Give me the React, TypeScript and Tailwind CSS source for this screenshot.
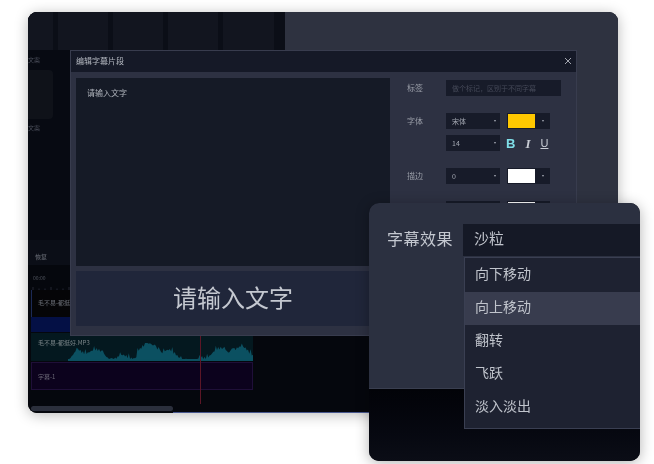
const font = { fontFamily: '"Noto Sans CJK SC", "Noto Sans", sans-serif' };

function wave() {
  const n = 150;
  const w = 185 / (n - 1);
  const pts: string[] = [];
  for (let i = 0; i < n; i++) {
    const env = 4 + 4 * Math.sin(i / 9) + 3 * Math.sin(i / 3.1) + (i > 55 && i < 75 ? 5 : 0) + (i > 130 ? 4 : 0);
    const jag = Math.abs(Math.sin(i * 1.7) * 3) + (i % 7 === 0 ? 3 : 0);
    const fade = i < 8 ? i / 8 : i > 96 && i < 106 ? 0.2 : 1;
    const h = Math.max(1, (env + jag) * fade);
    pts.push(`${(i * w).toFixed(1)},${(18 - Math.min(h, 17)).toFixed(1)}`);
  }
  return `0,18 ${pts.join(" ")} 185,18`;
}

function Select({ label, w = "w-[54px]" }: { label: string; w?: string }) {
  return (
    <div className={`${w} h-4 bg-[#171b29] flex items-center justify-between pl-1.5 pr-[11px] text-[7px] text-[#a4a8b2]`}>
      <span>{label}</span>
      <span className="w-0 h-0 -mr-[7px] border-x-[1.5px] border-x-transparent border-t-[2.5px] border-t-[#a8acb6]" />
    </div>
  );
}

function Swatch({ color }: { color: string }) {
  return (
    <div className="w-[43px] h-4 bg-[#171b29] flex items-center justify-between pl-px pr-[6px]">
      <div className={`w-[27px] h-[14px] ${color}`} />
      <span className="w-0 h-0 border-x-[1.5px] border-x-transparent border-t-[2.5px] border-t-[#a8acb6]" />
    </div>
  );
}

function Tile({ w }: { w: string }) {
  return <div className={`${w} h-full bg-[#12151f]`} />;
}

export default function App() {
  return (
    <div className="relative w-[654px] h-[464px] bg-white overflow-hidden blur-[0.5px]" style={font}>
      {/* Main window */}
      <div className="absolute left-[28px] top-[12px] w-[590px] h-[401px] rounded-[9px] overflow-hidden flex flex-col bg-[#05070d] shadow-[0_2px_14px_rgba(0,0,0,0.28)]">
        <div className="h-[228px] flex shrink-0">
          <div className="w-[257px] bg-[#070a12] flex flex-col">
            <div className="h-[38px] flex gap-[5px] bg-[#0b0e17] shrink-0">
              <Tile w="w-[25px]" />
              <Tile w="w-[50px]" />
              <Tile w="w-[50px]" />
              <Tile w="w-[50px]" />
              <Tile w="w-[51px]" />
            </div>
            <div className="text-[6px] leading-[8px] text-[#4c505c] mt-[6px]">文案</div>
            <div className="w-[25px] h-[49px] bg-[#0f1219] rounded-r-sm mt-[6px]" />
            <div className="text-[6px] leading-[8px] text-[#4c505c] mt-[5px]">文案</div>
          </div>
          <div className="flex-1 bg-[#2e3240]" />
        </div>

        {/* Timeline */}
        <div className="flex-1 flex flex-col pl-[3px] relative bg-[#05070d]">
          <div className="h-[25px] -ml-[3px] pl-[7px] bg-[#0b0e17] flex items-end pb-[4px] text-[6px] text-[#70747e] shrink-0">
            <span>恢复</span>
          </div>
          <div className="relative h-[25px] pl-[2px] text-[5px] leading-[6px] pt-[10px] text-[#50545e] shrink-0">
            00:00
            <svg className="absolute left-0 bottom-0" width="42" height="4" viewBox="0 0 42 4" stroke="#3a3e4a" strokeWidth="0.6">
              <path d="M2 4V1M8 4V2.5M14 4V2.5M20 4V1M26 4V2.5M32 4V2.5M38 4V1" />
            </svg>
          </div>
          <div className="w-[222px] h-[27px] bg-[#050507] border-l border-[#1c2a55] flex items-center pl-[6px] pb-[2px] text-[6px] text-[#6c7078] shrink-0">毛不易-都挺好</div>
          <div className="w-[222px] h-[15px] bg-[#041045] shrink-0" />
          <div className="relative w-[222px] h-[28px] mt-px bg-[#04181f] shrink-0">
            <span className="absolute left-[7px] top-[6px] text-[6px] leading-[8px] text-[#7a8488]">毛不易-都挺好.MP3</span>
            <svg className="absolute left-[37px] top-[9px]" width="185" height="19" viewBox="0 0 185 19">
              <polygon points={wave()} fill="#0b5061" />
              <rect x="-37" y="17.5" width="222" height="1.5" fill="#0b5061" />
            </svg>
          </div>
          <div className="w-[222px] h-[28px] mt-px bg-[#0c021d] border border-[#1f0f38] flex items-center pl-[6px] text-[6px] text-[#6c6a78] shrink-0">字幕-1</div>
          <div className="absolute left-[172px] top-[96px] w-px h-[68px] bg-[#5c1626]" />
          <div className="absolute left-[3px] bottom-[2px] w-[142px] h-[5px] rounded-full bg-[#2b2f3c]" />
          <div className="absolute left-[145px] right-0 bottom-0 h-px bg-[#47578f]" />
        </div>
      </div>

      {/* Subtitle edit dialog */}
      <div className="absolute left-[70px] top-[50px] w-[507px] h-[286px] bg-[#2d3142] border border-[#383c4e] flex flex-col">
        <div className="h-[21px] bg-[#151927] flex items-center justify-between pl-[5px] pr-[4px] pb-[2px] text-[8px] text-[#b4b8c0] shrink-0">
          <span>编辑字幕片段</span>
          <svg width="8" height="8" viewBox="0 0 8 8" stroke="#b4b8c0" strokeWidth="0.9">
            <path d="M1 1l6 6M7 1L1 7" />
          </svg>
        </div>
        <div className="flex-1 flex pl-[5px] pt-[6px]">
          <div className="w-[314px] flex flex-col gap-[5px]">
            <div className="h-[188px] bg-[#151a26] pl-[11px] pt-[10px] text-[8px] leading-[10px] text-[#b0b4bc]">请输入文字</div>
            <div className="h-[55px] bg-[#20263a] flex items-center justify-center pb-1 text-[24px] text-[#c4c8d0]">请输入文字</div>
          </div>
          <div className="flex-1 pl-[17px] pt-[2px] text-[8px] text-[#9a9ea8]">
            <div className="flex items-center h-4">
              <span className="w-[39px]">标签</span>
              <div className="w-[115px] h-4 bg-[#171b29] pl-1.5 flex items-center text-[7px] text-[#454958]">做个标记，区别于不同字幕</div>
            </div>
            <div className="flex mt-[17px]">
              <span className="w-[39px] leading-4">字体</span>
              <div className="flex flex-col gap-[6px]">
                <div className="flex gap-[7px]">
                  <Select label="宋体" />
                  <Swatch color="bg-[#ffc800]" />
                </div>
                <div className="flex gap-[6px] items-center">
                  <Select label="14" />
                  <div className="flex items-center gap-[10px] leading-none">
                    <span className="font-bold text-[13px] text-[#7fdfe8]" style={{ fontFamily: '"Liberation Sans", sans-serif' }}>B</span>
                    <span className="italic font-bold text-[13px] text-[#c8ccd4]" style={{ fontFamily: '"Liberation Serif", serif' }}>I</span>
                    <span className="underline text-[#c8ccd4] text-[11px]" style={{ fontFamily: '"Liberation Sans", sans-serif' }}>U</span>
                  </div>
                </div>
              </div>
            </div>
            <div className="flex mt-[17px]">
              <span className="w-[39px] leading-4">描边</span>
              <div className="flex gap-[7px]">
                <Select label="0" />
                <Swatch color="bg-white" />
              </div>
            </div>
            <div className="flex mt-[17px] pl-[39px]">
              <div className="flex gap-[7px]">
                <Select label="0" />
                <Swatch color="bg-white" />
              </div>
            </div>
          </div>
        </div>
      </div>

      {/* Subtitle effects popup */}
      <div className="absolute left-[369px] top-[203px] w-[271px] h-[258px] rounded-[10px] overflow-hidden flex flex-col bg-[#070a12] shadow-[0_2px_14px_rgba(0,0,0,0.3)]">
        <div className="h-[186px] bg-[#2b3040] border-b border-[#3a3f50] flex items-start pl-[18px] pt-[21px] shrink-0">
          <span className="w-[76px] text-[16px] leading-[28px] tracking-[0.5px] text-[#c4c8d0] shrink-0">字幕效果</span>
          <div className="flex-1 h-8 bg-[#151926] flex items-center pl-[11px] pb-1 text-[15px] text-[#c0c4cc]">沙粒</div>
        </div>
        <div className="flex-1 bg-gradient-to-b from-[#020308] to-[#0b0d16]" />
        <div className="absolute left-[95px] top-[54px] right-0 h-[172px] bg-[#1e2231] border border-r-0 border-[#3a3f52] text-[14px] text-[#c0c4cc] pt-px">
          {["向下移动", "向上移动", "翻转", "飞跃", "淡入淡出"].map((t, i) => (
            <div key={t} className={`h-[33px] flex items-center pl-[10px] pb-[5px] ${i === 1 ? "bg-[#383c4e]" : ""}`}>{t}</div>
          ))}
        </div>
      </div>
    </div>
  );
}
